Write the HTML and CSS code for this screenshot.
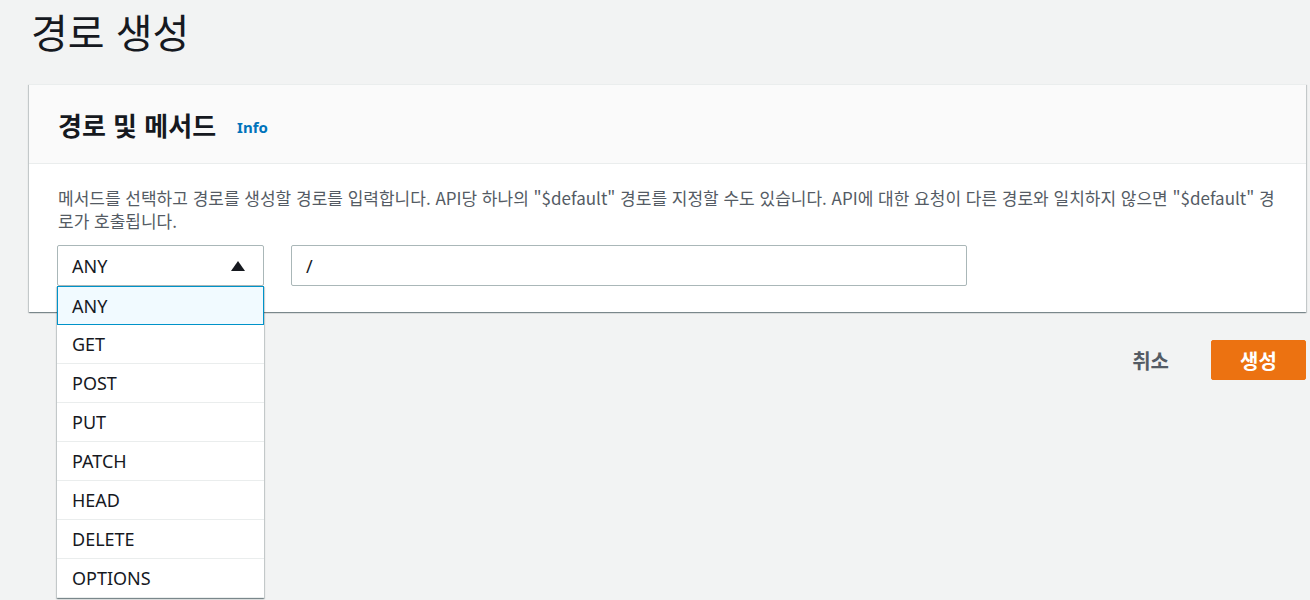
FILE: index.html
```html
<!DOCTYPE html>
<html lang="ko">
<head>
<meta charset="utf-8">
<title>경로 생성</title>
<link rel="stylesheet" href="styles.css">
</head>
<body>
<div class="page">
  <h1 class="page-title">경로 생성</h1>
  <section class="panel">
    <header class="panel-header">
      <h2 class="panel-title">경로 및 메서드</h2>
      <a class="info-link" href="#">Info</a>
    </header>
    <div class="panel-body">
      <p class="desc">메서드를 선택하고 경로를 생성할 경로를 입력합니다. API당 하나의 "$default" 경로를 지정할 수도 있습니다. API에 대한 요청이 다른 경로와 일치하지 않으면 "$default" 경로가 호출됩니다.</p>
      <div class="fields">
        <div class="select-wrap">
          <div class="select">
            <span class="select-value">ANY</span>
            <svg class="caret" width="14" height="10" viewBox="0 0 14 10"><path d="M7 0 L14 10 L0 10 Z" fill="#16191f"/></svg>
          </div>
          <ul class="menu">
            <li class="menu-item selected">ANY</li>
            <li class="menu-item">GET</li>
            <li class="menu-item">POST</li>
            <li class="menu-item">PUT</li>
            <li class="menu-item">PATCH</li>
            <li class="menu-item">HEAD</li>
            <li class="menu-item">DELETE</li>
            <li class="menu-item">OPTIONS</li>
          </ul>
        </div>
        <div class="text-input">/</div>
      </div>
    </div>
  </section>
  <div class="actions">
    <button class="btn-link">취소</button>
    <button class="btn-primary">생성</button>
  </div>
</div>
</body>
</html>
```

FILE: styles.css
```css
* { box-sizing: border-box; }
html, body {
  margin: 0;
  background: #f2f3f3;
  height: 100%;
  overflow: hidden;
}
body {
  font-family: "Noto Sans", "Noto Sans CJK KR", sans-serif;
  color: #16191f;
}
.page {
  padding: 0 4px 0 29px;
}
.page-title {
  margin: 0;
  padding: 7px 0 0 2px;
  height: 84px;
  font-family: "Noto Sans CJK KR", sans-serif;
  font-size: 40px;
  font-weight: 400;
  line-height: 48px;
  color: #16191f;
}
.panel {
  background: #fff;
  border-top: 1px solid #eaeded;
  box-shadow: 0 1px 1px 0 rgba(0, 28, 36, 0.3), 1px 1px 1px 0 rgba(0, 28, 36, 0.15), -1px 1px 1px 0 rgba(0, 28, 36, 0.15);
}
.panel-header {
  display: flex;
  align-items: center;
  height: 79px;
  padding: 0 28px 0 29px;
  background: #fafafa;
  border-bottom: 1px solid #eaeded;
}
.panel-title {
  margin: 0;
  font-family: "Noto Sans CJK KR", sans-serif;
  font-size: 26px;
  font-weight: 700;
  color: #16191f;
}
.info-link {
  margin-left: 21px;
  margin-top: 5px;
  font-family: "Noto Sans", sans-serif;
  font-size: 15px;
  font-weight: 700;
  color: #0073bb;
  text-decoration: none;
}
.panel-body {
  padding: 22px 28px 26px 28px;
}
.desc {
  margin: 0 0 13px 1px;
  font-family: "Noto Sans CJK KR", sans-serif;
  font-size: 17px;
  line-height: 23px;
  color: #545b64;
}
.fields {
  display: flex;
  gap: 27px;
}
.select-wrap {
  position: relative;
  width: 207px;
}
.select {
  display: flex;
  align-items: center;
  justify-content: space-between;
  height: 41px;
  padding: 0 18px 0 14px;
  border: 1px solid #aab7b8;
  border-radius: 2px;
  background: #fff;
  font-size: 18px;
}
.caret { display: block; }
.menu {
  position: absolute;
  top: 100%;
  left: 0;
  width: 207px;
  margin: 0;
  padding: 0;
  list-style: none;
  background: #fff;
  box-shadow: 0 1px 1px 0 rgba(0, 28, 36, 0.3), 1px 1px 1px 0 rgba(0, 28, 36, 0.15), -1px 1px 1px 0 rgba(0, 28, 36, 0.15);
  z-index: 10;
}
.menu-item {
  height: 39px;
  padding: 0 14px 0 15px;
  display: flex;
  align-items: center;
  font-size: 18px;
  color: #16191f;
  border-bottom: 1px solid #eaeded;
}
.menu-item.selected {
  background: #f1faff;
  border: 1px solid #0093c9;
  padding-left: 14px;
}
.text-input {
  width: 676px;
  height: 41px;
  padding: 0 14px;
  display: flex;
  align-items: center;
  border: 1px solid #aab7b8;
  border-radius: 2px;
  font-size: 18px;
}
.actions {
  display: flex;
  justify-content: flex-end;
  align-items: center;
  gap: 22px;
  margin-top: 28px;
}
.btn-link, .btn-primary {
  font-family: "Noto Sans CJK KR", sans-serif;
  font-size: 20px;
  font-weight: 700;
  border-radius: 2px;
  height: 40px;
  cursor: pointer;
}
.btn-link {
  background: transparent;
  border: none;
  color: #545b64;
  padding: 0 20px;
}
.btn-primary {
  width: 95px;
  background: #ec7211;
  border: 1px solid #ec7211;
  color: #fff;
}
```
